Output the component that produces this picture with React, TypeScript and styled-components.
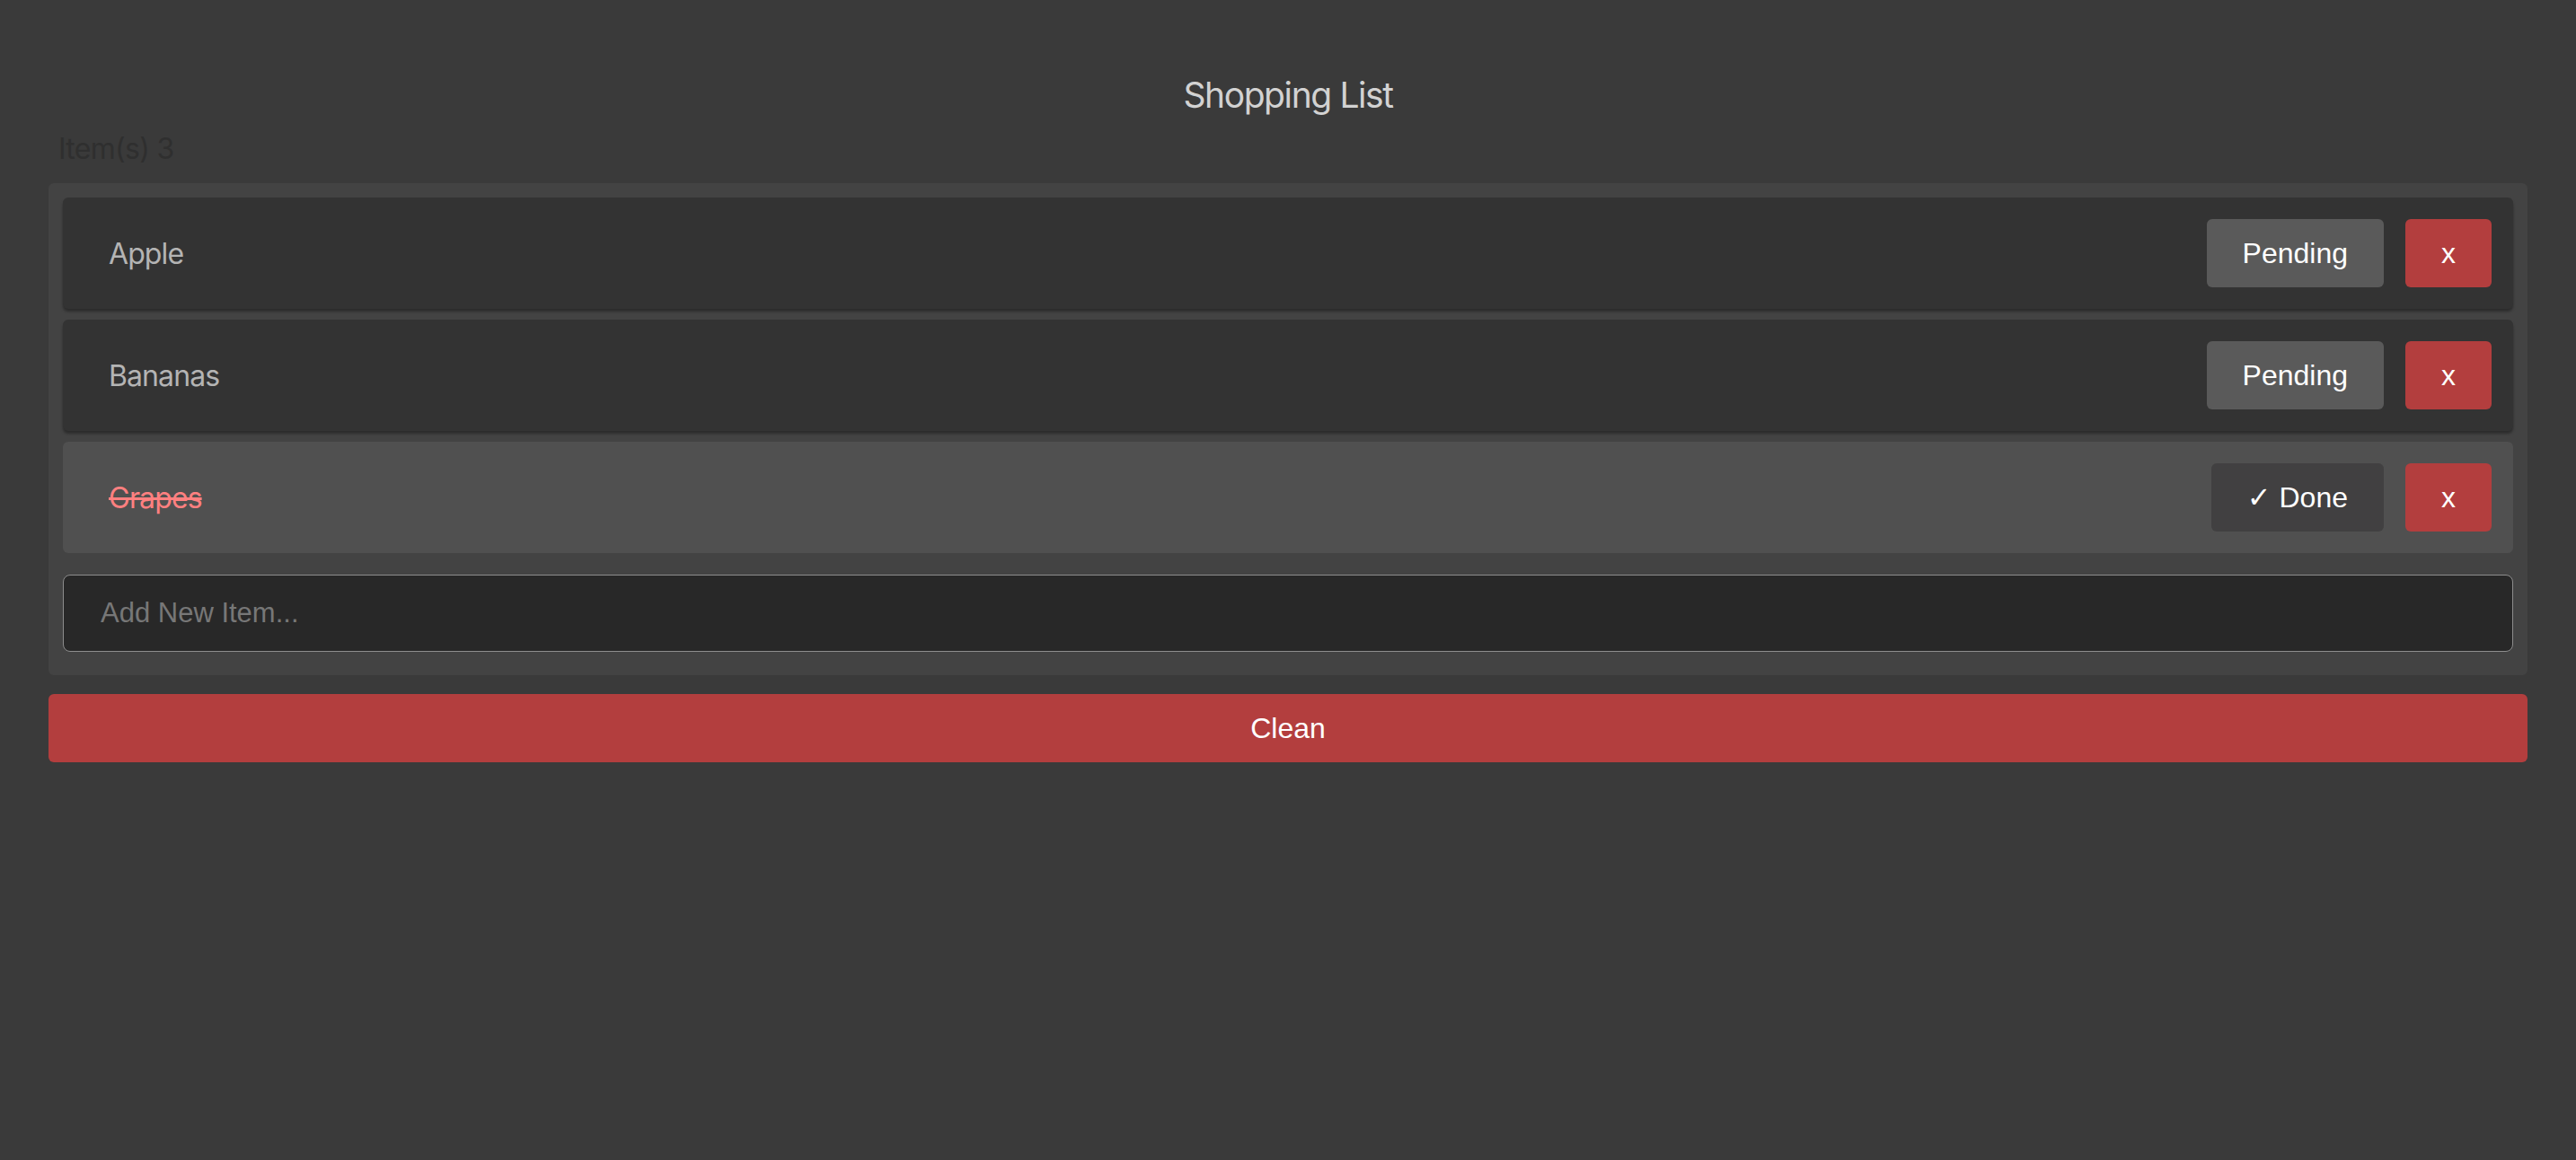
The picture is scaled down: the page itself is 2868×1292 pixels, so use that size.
import React, { useState } from "react";
import styled, { createGlobalStyle } from "styled-components";

const GlobalStyle = createGlobalStyle`
  html, body {
    margin: 0;
    padding: 0;
    background: #3a3a3a;
  }
  body {
    font-family: Inter, "Noto Sans", "DejaVu Sans", sans-serif;
  }
  * { box-sizing: border-box; }
`;

const Page = styled.main`
  padding: 0 54px 40px;
  display: flex;
  flex-direction: column;
`;

const Title = styled.h1`
  margin: 82px 0 0;
  font-family: Inter, "Noto Sans", sans-serif;
  font-size: 39px;
  line-height: 48px;
  letter-spacing: -1.4px;
  font-weight: 400;
  color: #d2d2d2;
  text-align: center;
`;

const Count = styled.div`
  margin: 17px 0 0 11px;
  font-family: Inter, "Noto Sans", sans-serif;
  font-size: 32px;
  line-height: 38px;
  letter-spacing: -0.7px;
  color: #2f2f2f;
`;

const Panel = styled.section`
  margin-top: 19px;
  background: #434343;
  border-radius: 6px;
  padding: 16px 16px 26px;
  display: flex;
  flex-direction: column;
  gap: 12px;
`;

const Row = styled.div<{ $done: boolean }>`
  height: 124px;
  display: flex;
  align-items: center;
  gap: 24px;
  padding: 0 24px 0 51px;
  border-radius: 6px;
  background: ${(p) => (p.$done ? "#505050" : "#333333")};
  box-shadow: ${(p) => (p.$done ? "none" : "0 3px 3px rgba(0, 0, 0, 0.35)")};
`;

const Name = styled.span<{ $done: boolean }>`
  flex: 1;
  font-family: Inter, "Noto Sans", sans-serif;
  font-size: 32px;
  letter-spacing: -0.9px;
  color: ${(p) => (p.$done ? "#ff8080" : "#b4b4b4")};
  text-decoration: ${(p) => (p.$done ? "line-through" : "none")};
`;

const Button = styled.button<{ $variant: "pending" | "done" | "danger" }>`
  height: 76px;
  padding: 0 40px;
  border: none;
  border-radius: 6px;
  font-family: "Liberation Sans", Arial, "DejaVu Sans", sans-serif;
  font-size: 32px;
  color: #ffffff;
  cursor: pointer;
  background: ${(p) =>
    p.$variant === "pending" ? "#5a5a5a" : p.$variant === "done" ? "#414041" : "#b33e3e"};
`;

const Input = styled.input`
  margin-top: 12px;
  height: 86px;
  width: 100%;
  background: #282828;
  border: 1px solid #8d8d8d;
  border-radius: 8px;
  padding: 0 41px;
  font-family: "Liberation Sans", Arial, sans-serif;
  font-size: 31px;
  color: #dddddd;
  outline: none;
  &::placeholder {
    color: #777777;
  }
`;

const CleanButton = styled.button`
  margin-top: 21px;
  height: 76px;
  width: 100%;
  border: none;
  border-radius: 6px;
  background: #b33e3e;
  color: #ffffff;
  font-family: "Liberation Sans", Arial, sans-serif;
  font-size: 32px;
  cursor: pointer;
`;

type Item = { name: string; done: boolean };

export default function App() {
  const [items] = useState<Item[]>([
    { name: "Apple", done: false },
    { name: "Bananas", done: false },
    { name: "Grapes", done: true },
  ]);

  return (
    <>
      <GlobalStyle />
      <Page>
        <Title>Shopping List</Title>
        <Count>Item(s) {items.length}</Count>
        <Panel>
          {items.map((it) => (
            <Row key={it.name} $done={it.done}>
              <Name $done={it.done}>{it.name}</Name>
              <Button $variant={it.done ? "done" : "pending"}>
                {it.done ? "✓ Done" : "Pending"}
              </Button>
              <Button $variant="danger">x</Button>
            </Row>
          ))}
          <Input placeholder="Add New Item..." />
        </Panel>
        <CleanButton>Clean</CleanButton>
      </Page>
    </>
  );
}
